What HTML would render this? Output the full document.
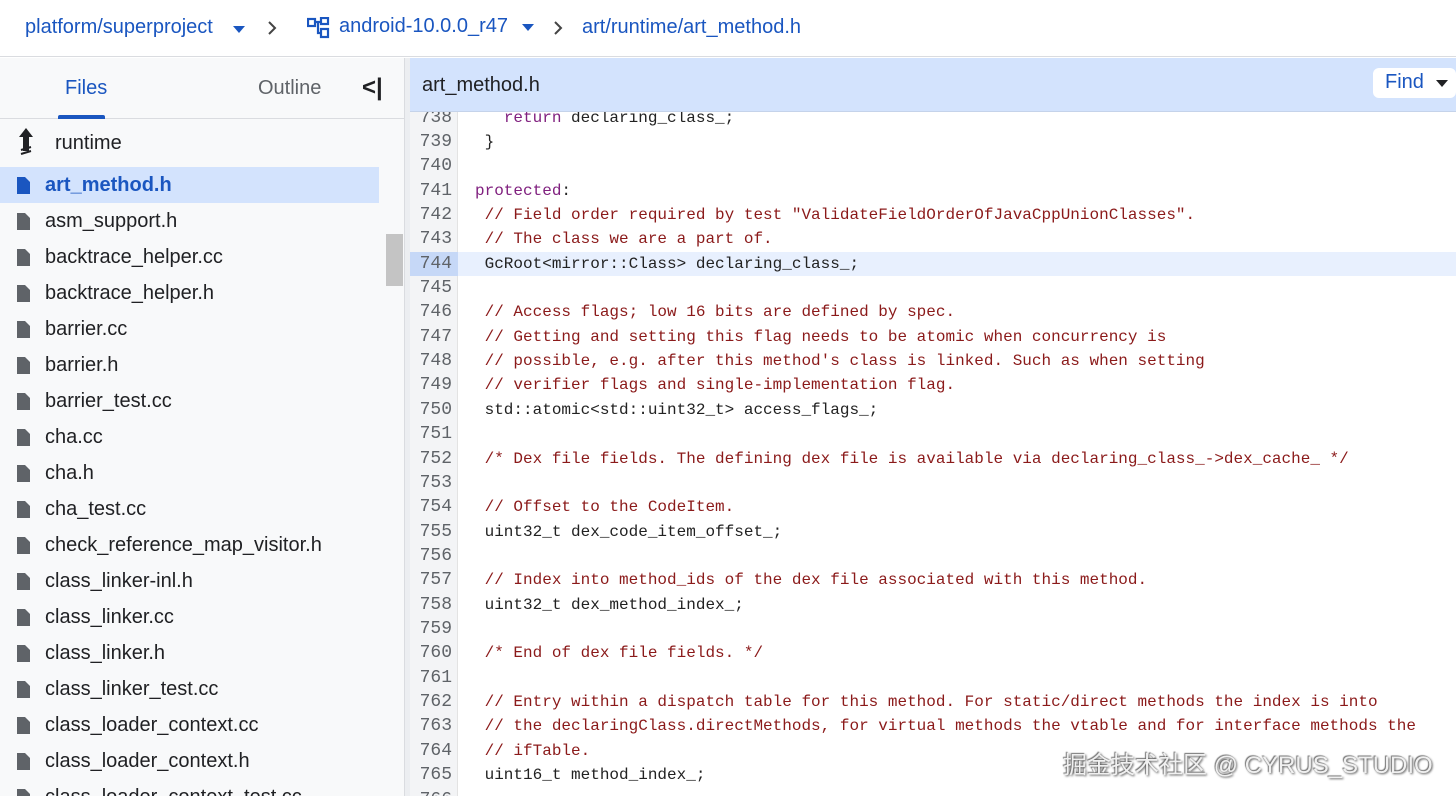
<!DOCTYPE html>
<html><head><meta charset="utf-8"><style>
*{margin:0;padding:0;box-sizing:border-box}
html,body{width:1456px;height:796px;overflow:hidden}
body{background:#fff;font-family:"Liberation Sans",Arial,sans-serif;position:relative}
.top{position:absolute;left:0;top:0;width:1456px;height:57px;background:#fff;border-bottom:1px solid #dadce0;color:#1a56c0;font-size:20px}
.top span{position:absolute;top:16px;white-space:nowrap}
.side{position:absolute;left:0;top:58px;width:404px;height:738px;background:#f8f9fa;overflow:hidden}
.split{position:absolute;left:404px;top:58px;width:6px;height:738px;background:#eceef1;border-left:1px solid #dadce0}
.tabs{position:absolute;left:0;top:0;width:404px;height:61px;border-bottom:1px solid #dadce0;font-size:20px}
.row{position:absolute;left:0;width:379px;height:36px;font-size:20px;color:#202124;white-space:nowrap}
.row .t{position:absolute;left:45px;top:7px}
.row svg{position:absolute;left:17px;top:10px}
.code{position:absolute;left:410px;top:58px;width:1046px;height:738px;overflow:hidden}
.hdr{position:absolute;left:0;top:0;width:1046px;height:54px;background:#d3e3fd;border-bottom:1px solid #c5d3ea}
.gut{position:absolute;left:0;top:54px;width:48px;height:700px;background:#f3f4f6;border-right:1px solid #e3e3e3}
.lines{position:absolute;left:0;top:47.5px;font-family:"Liberation Mono",monospace;font-size:16px;line-height:24.37px}
.l{height:24.37px;position:relative;white-space:pre}
.n{position:absolute;left:0;width:42px;text-align:right;color:#5f6368;font-size:18px}
.c{position:absolute;left:65px;color:#222}
.cm{color:#8b1a1a}.kw{color:#80207f}
.hl{background:#e8f0fe;width:1046px}
.hl .n{background:#c6d8f7;width:48px;padding-right:6px}
</style></head><body>
<div class="top">
<span style="left:25px">platform/superproject</span>
<svg style="position:absolute;left:233px;top:26px" width="12" height="7"><path d="M0 0h12L6 7z" fill="#1a56c0"/></svg>
<svg style="position:absolute;left:267px;top:21px" width="10" height="14"><path d="M2 1l6 6-6 6" stroke="#444" stroke-width="2" fill="none"/></svg>
<svg style="position:absolute;left:307px;top:17px" width="24" height="22"><g fill="none" stroke="#1a56c0" stroke-width="2.2"><rect x="1" y="2" width="7" height="7"/><rect x="14" y="1" width="7" height="6"/><rect x="14" y="12" width="7" height="8"/><path d="M8 5h6M11 5v11h3"/></g></svg>
<span style="left:339px;top:15px">android-10.0.0_r47</span>
<svg style="position:absolute;left:522px;top:24px" width="12" height="7"><path d="M0 0h12L6 7z" fill="#1a56c0"/></svg>
<svg style="position:absolute;left:553px;top:21px" width="10" height="14"><path d="M2 1l6 6-6 6" stroke="#444" stroke-width="2" fill="none"/></svg>
<span style="left:582px">art/runtime/art_method.h</span>
</div>
<div class="side">
<div class="tabs">
<span style="position:absolute;left:65px;top:19px;color:#1a56c0">Files</span>
<div style="position:absolute;left:58px;top:57px;width:47px;height:4px;background:#1a56c0;border-radius:2px 2px 0 0"></div>
<span style="position:absolute;left:258px;top:19px;color:#5f6368">Outline</span>
<span style="position:absolute;left:362px;top:16px;color:#202124;font-size:24px;font-weight:bold">&lt;|</span>
</div>
<div class="row" style="top:67px"><svg width="18" height="30" style="top:3px"><path d="M9 0L2 9h4v14h6V9h4z" fill="#202124"/><path d="M4 22l10-3M4 26l10-3" stroke="#202124" stroke-width="2"/></svg><span class="t" style="left:55px">runtime</span></div>
<div class="row" style="top:109px;background:#d3e3fd;color:#1a56c0;font-weight:bold"><svg width="13" height="17"><path d="M0 0h8l5 5v12H0z" fill="#1a56c0"/></svg><span class="t">art_method.h</span></div>
<div id="files"></div>
<div style="position:absolute;left:386px;top:176px;width:17px;height:52px;background:#c4c4c4"></div>
</div>
<div class="split"></div>
<div class="code">
<div class="gut"></div>
<div class="lines"><div class="l"><span class="n">738</span><span class="c">   <span class="kw">return</span> declaring_class_;</span></div><div class="l"><span class="n">739</span><span class="c"> }</span></div><div class="l"><span class="n">740</span></div><div class="l"><span class="n">741</span><span class="c"><span class="kw">protected</span>:</span></div><div class="l"><span class="n">742</span><span class="c cm"> // Field order required by test "ValidateFieldOrderOfJavaCppUnionClasses".</span></div><div class="l"><span class="n">743</span><span class="c cm"> // The class we are a part of.</span></div><div class="l hl"><span class="n">744</span><span class="c"> GcRoot&lt;mirror::Class&gt; declaring_class_;</span></div><div class="l"><span class="n">745</span></div><div class="l"><span class="n">746</span><span class="c cm"> // Access flags; low 16 bits are defined by spec.</span></div><div class="l"><span class="n">747</span><span class="c cm"> // Getting and setting this flag needs to be atomic when concurrency is</span></div><div class="l"><span class="n">748</span><span class="c cm"> // possible, e.g. after this method's class is linked. Such as when setting</span></div><div class="l"><span class="n">749</span><span class="c cm"> // verifier flags and single-implementation flag.</span></div><div class="l"><span class="n">750</span><span class="c"> std::atomic&lt;std::uint32_t&gt; access_flags_;</span></div><div class="l"><span class="n">751</span></div><div class="l"><span class="n">752</span><span class="c cm"> /* Dex file fields. The defining dex file is available via declaring_class_-&gt;dex_cache_ */</span></div><div class="l"><span class="n">753</span></div><div class="l"><span class="n">754</span><span class="c cm"> // Offset to the CodeItem.</span></div><div class="l"><span class="n">755</span><span class="c"> uint32_t dex_code_item_offset_;</span></div><div class="l"><span class="n">756</span></div><div class="l"><span class="n">757</span><span class="c cm"> // Index into method_ids of the dex file associated with this method.</span></div><div class="l"><span class="n">758</span><span class="c"> uint32_t dex_method_index_;</span></div><div class="l"><span class="n">759</span></div><div class="l"><span class="n">760</span><span class="c cm"> /* End of dex file fields. */</span></div><div class="l"><span class="n">761</span></div><div class="l"><span class="n">762</span><span class="c cm"> // Entry within a dispatch table for this method. For static/direct methods the index is into</span></div><div class="l"><span class="n">763</span><span class="c cm"> // the declaringClass.directMethods, for virtual methods the vtable and for interface methods the</span></div><div class="l"><span class="n">764</span><span class="c cm"> // ifTable.</span></div><div class="l"><span class="n">765</span><span class="c"> uint16_t method_index_;</span></div><div class="l"><span class="n">766</span></div></div>
<div class="hdr"><span style="position:absolute;left:12px;top:16px;font-size:20px;color:#202124">art_method.h</span>
<div style="position:absolute;left:963px;top:10px;width:83px;height:30px;background:#fff;border-radius:6px"><span style="position:absolute;left:12px;top:3px;font-size:20px;color:#1a56c0">Find</span><svg style="position:absolute;left:63px;top:12px" width="12" height="7"><path d="M0 0h12L6 7z" fill="#202124"/></svg></div>
</div>
</div>
<div style="position:absolute;left:1063px;top:745px;font-size:24px;white-space:nowrap;color:#f0f0f0;text-shadow:1px 1px 2px #555,-1px -1px 1px #777;font-family:'Liberation Sans','Noto Sans CJK SC',sans-serif">掘金技术社区 @ CYRUS_STUDIO</div>
<script>
var f=["asm_support.h","backtrace_helper.cc","backtrace_helper.h","barrier.cc","barrier.h","barrier_test.cc","cha.cc","cha.h","cha_test.cc","check_reference_map_visitor.h","class_linker-inl.h","class_linker.cc","class_linker.h","class_linker_test.cc","class_loader_context.cc","class_loader_context.h","class_loader_context_test.cc"];
var h="";f.forEach(function(n,i){h+='<div class="row" style="top:'+(145+i*36)+'px"><svg width="13" height="17"><path d="M0 0h8l5 5v12H0z" fill="#5f6368"/></svg><span class="t">'+n+'</span></div>';});
document.getElementById("files").innerHTML=h;
</script>
</body></html>
